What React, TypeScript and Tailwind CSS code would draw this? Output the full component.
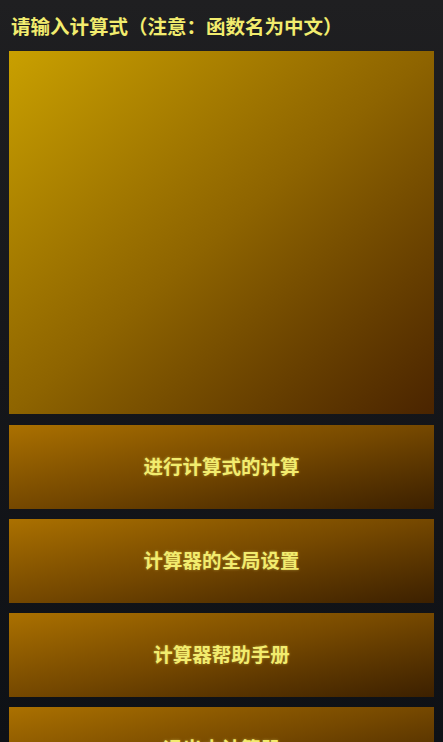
export default function App() {
  const buttons = ["进行计算式的计算", "计算器的全局设置", "计算器帮助手册", "退出本计算器"];

  return (
    <div className="h-[742px] w-[443px] overflow-hidden bg-gradient-to-b from-[#1f1f21] via-[#15161a] to-[#0e1116] font-['Noto_Sans_CJK_SC',sans-serif]">
      <div className="flex flex-col px-[9px]">
        <div className="h-[51px] pl-[2px] pt-[9px] text-[19.5px] font-bold leading-[34px] text-[#f2ec6e]">
          请输入计算式（注意：函数名为中文）
        </div>

        <textarea className="h-[363px] w-full resize-none bg-gradient-to-br from-[#c9a000] via-[#8e6400] to-[#4a2400] outline-none" />

        <div className="mt-[11px] flex flex-col gap-[10px]">
          {buttons.map((label) => (
            <button
              key={label}
              className="flex h-[84px] w-full shrink-0 items-center justify-center bg-gradient-to-br from-[#ab7100] via-[#754800] to-[#3c2000] pb-[2px] text-[19.5px] font-bold text-[#f2ec6e] [text-shadow:0_0_3px_rgba(242,236,110,0.45)]"
            >
              {label}
            </button>
          ))}
        </div>
      </div>
    </div>
  );
}
